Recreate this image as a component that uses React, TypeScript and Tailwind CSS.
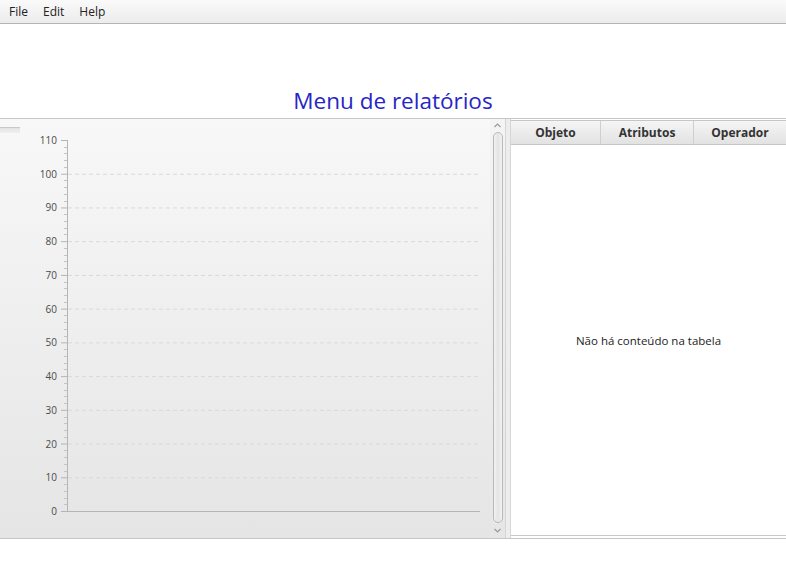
import React from 'react';

const FONT = { fontFamily: '"Open Sans", "Noto Sans", sans-serif' };

function Chart() {
  const y0 = 392;
  const step = (392 - 21) / 110;
  const majors = Array.from({ length: 12 }, (_, i) => i * 10);
  const minors: number[] = [];
  for (let v = 0; v < 110; v += 2) if (v % 10 !== 0) minors.push(v);

  return (
    <svg width="489" height="419" className="block">
      {majors.slice(1, 11).map((v) => (
        <line
          key={'g' + v}
          x1={68}
          x2={480}
          y1={y0 - v * step + 0.5}
          y2={y0 - v * step + 0.5}
          stroke="#d9d9d9"
          strokeDasharray="4 3"
        />
      ))}
      <line x1={67.5} x2={67.5} y1={21} y2={y0} stroke="#b5b5b5" />
      <line x1={67} x2={480} y1={y0 + 0.5} y2={y0 + 0.5} stroke="#b5b5b5" />
      {majors.map((v) => (
        <g key={'m' + v}>
          <line x1={61} x2={67} y1={y0 - v * step + 0.5} y2={y0 - v * step + 0.5} stroke="#b5b5b5" />
          <text
            x={57}
            y={y0 - v * step + 4}
            textAnchor="end"
            fontSize="10"
            fill="#4a4a4a"
            style={FONT}
          >
            {v}
          </text>
        </g>
      ))}
      {minors.map((v) => (
        <line
          key={'n' + v}
          x1={64}
          x2={67}
          y1={Math.round(y0 - v * step) + 0.5}
          y2={Math.round(y0 - v * step) + 0.5}
          stroke="#c4c4c4"
        />
      ))}
    </svg>
  );
}

function ScrollBar() {
  return (
    <div className="w-[15px] h-full flex flex-col items-center bg-gradient-to-b from-[#f4f4f4] to-[#e6e6e6] pt-[3px] pb-[2px]">
      <svg width="9" height="7" className="mb-[3px]">
        <path d="M1.5 5 L4.5 2 L7.5 5" stroke="#9a9a9a" fill="none" strokeWidth="1.2" />
      </svg>
      <div className="flex-1 w-[10px] rounded-[5px] border border-[#b9b9b9] bg-gradient-to-r from-[#f2f2f2] via-[#e4e4e4] to-[#f2f2f2]" />
      <svg width="9" height="7" className="mt-[4px] mb-[2px]">
        <path d="M1.5 2 L4.5 5 L7.5 2" stroke="#9a9a9a" fill="none" strokeWidth="1.2" />
      </svg>
    </div>
  );
}

export default function App() {
  return (
    <div className="w-[786px] h-[578px] bg-white flex flex-col overflow-hidden" style={FONT}>
      {/* Menu bar */}
      <div className="h-[24px] flex items-center gap-[15px] px-[9px] text-[12px] text-[#222] bg-gradient-to-b from-[#fafafa] to-[#ececec] border-b border-[#b4b4b4]">
        <span>File</span>
        <span>Edit</span>
        <span>Help</span>
      </div>

      {/* Title */}
      <div className="h-[94px] flex items-end justify-center pb-[3px]">
        <span className="text-[22.5px] leading-[28px] text-[#2626c6]">Menu de relatórios</span>
      </div>

      {/* Split pane */}
      <div className="h-[421px] flex border-t border-b border-[#c6c6c6]">
        <div className="w-[490px] h-full relative bg-gradient-to-b from-[#f8f8f8] to-[#e5e5e5]">
          <div className="absolute left-0 top-[8px] w-[20px] h-[6px] border-t border-[#c8c8c8] bg-gradient-to-b from-[#e4e4e4] to-[#efefef]" />
          <Chart />
        </div>
        <ScrollBar />
        <div className="w-[6px] h-full bg-[#ededed] border-l border-r border-[#d6d6d6]" />

        {/* Table */}
        <div className="flex-1 flex flex-col pt-[1px] pb-[2px] bg-white">
          <div className="h-[25px] flex text-[12px] font-bold text-[#333] bg-gradient-to-b from-[#f5f5f5] to-[#e2e2e2] border-t border-b border-[#c6c6c6]">
            <div className="w-[90px] flex items-center justify-center border-r border-[#cfcfcf]">Objeto</div>
            <div className="w-[93px] flex items-center justify-center border-r border-[#cfcfcf]">Atributos</div>
            <div className="flex-1 flex items-center justify-center">Operador</div>
          </div>
          <div className="flex-1 flex items-center justify-center pt-[2px] text-[11.5px] text-[#222] border-b border-[#c8c8c8]">
            Não há conteúdo na tabela
          </div>
        </div>
      </div>
    </div>
  );
}
